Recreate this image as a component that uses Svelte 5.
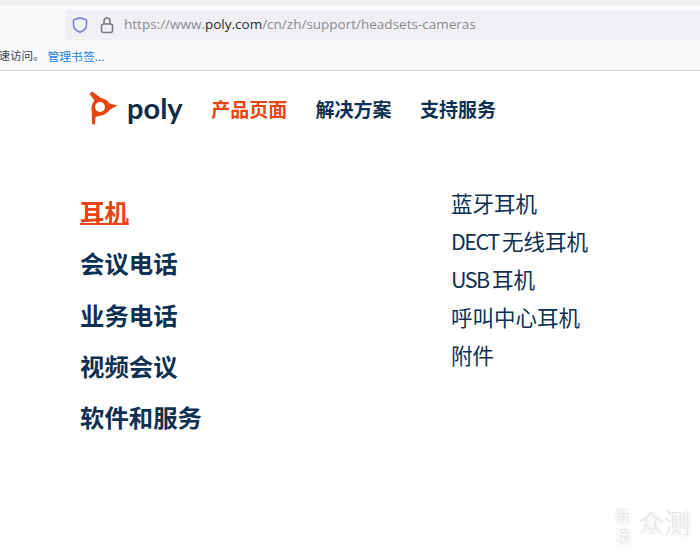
<script>
	const nav = [
		{ label: '产品页面', active: true },
		{ label: '解决方案' },
		{ label: '支持服务' }
	];
	const categories = ['耳机', '会议电话', '业务电话', '视频会议', '软件和服务'];
	const products = [
		{ name: '蓝牙耳机' },
		{ latin: 'DECT ', name: '无线耳机' },
		{ latin: 'USB ', name: '耳机' },
		{ name: '呼叫中心耳机' },
		{ name: '附件' }
	];
</script>

<div class="page">
	<header class="browser">
		<div class="tabstrip"></div>
		<div class="toolbar">
			<div class="urlbar">
				<svg class="shield" width="18" height="18" viewBox="0 0 18 18">
					<path d="M9 1.800 15.500 4V9c0 3.400-2.800 5.900-6.500 7.300C5.300 14.900 2.500 12.400 2.500 9V4Z" fill="none" stroke="#7a78e8" stroke-width="1.500" stroke-linejoin="round" />
				</svg>
				<svg class="lock" width="16" height="18" viewBox="0 0 16 18">
					<path d="M5 8V5a3 3 0 0 1 6 0V8" fill="none" stroke="#77777c" stroke-width="1.500" />
					<rect x="2.500" y="8" width="11" height="8.500" rx="2" fill="none" stroke="#77777c" stroke-width="1.500" />
				</svg>
				<span class="url">https://www.<b>poly.com</b>/cn/zh/support/headsets-cameras</span>
			</div>
		</div>
		<div class="bookmarks">
			<span class="hint">快速访问。</span><span class="manage">管理书签...</span>
		</div>
	</header>

	<nav class="topnav">
		<div class="logo">
			<svg width="30" height="36" viewBox="0 0 30 36">
				<path d="M1.500 4 4 1.500 13 8Q19 9 21.500 13.500L29.500 15.500 21.500 20Q18 25 11 26L7.500 27 7 34.500 4 34 3.800 22Q2.500 15 6.500 10.500Z" fill="#e8440f" />
				<circle cx="12" cy="17" r="5" fill="#fff" />
			</svg>
			<span class="wordmark">poly</span>
		</div>
		{#each nav as item}
			<span class="navitem" class:active={item.active}>{item.label}</span>
		{/each}
	</nav>

	<main class="menu">
		<ul class="categories">
			{#each categories as name, i}
				<li class:current={i === 0}>{name}</li>
			{/each}
		</ul>
		<ul class="products">
			{#each products as item}
				<li>{#if item.latin}<span class="latin">{item.latin}</span>{/if}{item.name}</li>
			{/each}
		</ul>
	</main>

	<div class="watermark">
		<span class="sina">新浪</span>
		<span class="zhongce">众测</span>
	</div>
</div>

<style>
	:global(body)
	{
		margin: 0;
		background: #fff;
	}

	.page
	{
		position: relative;
		width: 700px;
		height: 553px;
		overflow: hidden;
		background: #fff;
		font-family: "Noto Sans CJK SC", sans-serif;
	}

	.browser
	{
		height: 70px;
		background: #f9f9fb;
		border-bottom: 1px solid #d4d4d6;
	}

	.tabstrip
	{
		height: 5px;
		background: #efeff0;
	}

	.toolbar
	{
		height: 35px;
		padding-left: 65px;
		display: flex;
		align-items: flex-end;
	}

	.urlbar
	{
		flex: 1;
		height: 30px;
		display: flex;
		align-items: center;
		background: #f0f0f4;
		border-radius: 4px 0 0 4px;
		padding-left: 6px;
	}

	.shield
	{
		margin-right: 10px;
	}

	.lock
	{
		margin-right: 9px;
	}

	.url
	{
		font-family: "Open Sans", sans-serif;
		font-size: 13.500px;
		color: #8a8a8f;
		white-space: nowrap;
		margin-bottom: 2px;
	}

	.url b
	{
		font-weight: 400;
		color: #2b2b30;
	}

	.bookmarks
	{
		height: 30px;
		display: flex;
		align-items: center;
		margin-left: -13px;
		font-size: 11.500px;
		white-space: nowrap;
	}

	.hint
	{
		color: #44444a;
		margin-right: 3px;
	}

	.manage
	{
		color: #1b82d8;
		font-size: 11.800px;
	}

	.topnav
	{
		display: flex;
		align-items: center;
		height: 76px;
		padding: 0 0 2px 88px;
		box-sizing: border-box;
		gap: 28.300px;
	}

	.logo
	{
		display: flex;
		align-items: center;
		gap: 9px;
		width: 95px;
	}

	.wordmark
	{
		font-family: "Lato", sans-serif;
		font-size: 29px;
		font-weight: 700;
		color: #0f2b45;
		line-height: 1;
		margin-bottom: 2px;
	}

	.navitem
	{
		font-size: 19px;
		font-weight: 700;
		color: #0e3153;
	}

	.navitem.active
	{
		color: #e8440f;
	}

	.menu
	{
		display: flex;
		padding: 37px 0 0 80px;
	}

	ul
	{
		list-style: none;
		margin: 0;
		padding: 0;
	}

	.categories
	{
		width: 371px;
		padding-top: 2px;
	}

	.categories li
	{
		height: 51.300px;
		line-height: 51.300px;
		font-size: 24.400px;
		font-weight: 700;
		color: #0e3153;
	}

	.categories li.current
	{
		color: #e8440f;
		text-decoration: underline;
		text-decoration-thickness: 2px;
		text-decoration-skip-ink: none;
		text-underline-offset: 1px;
	}

	.products li
	{
		height: 38px;
		line-height: 38px;
		font-size: 21.500px;
		color: #0e3153;
		white-space: nowrap;
	}

	.latin
	{
		letter-spacing: -1.500px;
	}

	.watermark
	{
		position: absolute;
		left: 613px;
		top: 507px;
		display: flex;
		align-items: flex-start;
		gap: 7px;
		color: #e6e6e6;
		text-shadow: 2px 2px 4px #e4e4e4;
		font-weight: 300;
	}

	.sina
	{
		writing-mode: vertical-rl;
		font-size: 17px;
		letter-spacing: 3px;
		line-height: 18px;
	}

	.zhongce
	{
		font-size: 26px;
		line-height: 30px;
	}
</style>
